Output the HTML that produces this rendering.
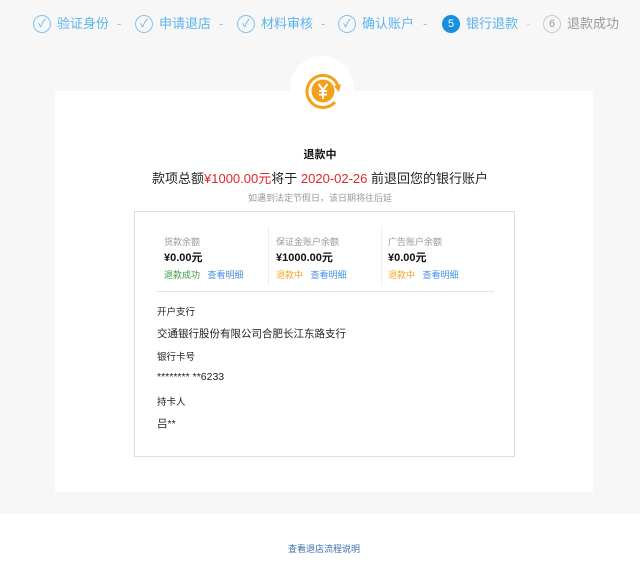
<!DOCTYPE html>
<html><head><meta charset="utf-8"><style>
*{margin:0;padding:0;box-sizing:border-box}
body{width:640px;height:569px;background:#fff;font-family:"Liberation Sans","Noto Sans CJK SC",sans-serif;position:relative;overflow:hidden}
.top{position:absolute;left:0;top:0;width:640px;height:514px;background:#f7f7f7}
.a{position:absolute;white-space:nowrap}
.c{position:absolute;width:18px;height:18px;border-radius:50%;border:1px solid #7cc6f2;top:15px;color:#5ab5ee;font-size:11px;text-align:center;line-height:16px}
.st{position:absolute;top:15px;font-size:13px;line-height:18px;color:#5ab5ee}
.d{position:absolute;top:15px;font-size:13px;line-height:18px;color:#8cc8ee}
.card{position:absolute;left:55px;top:91px;width:538px;height:401px;background:#fff}
.box{position:absolute;left:134px;top:211px;width:381px;height:246px;border:1px solid #ddd;background:#fff}
.lbl{font-size:9px;color:#999}
.amt{font-size:11px;color:#111;font-weight:bold}
.s{font-size:9px}
.t{font-size:9.5px;color:#222}
</style></head><body>
<div class="top"></div>
<div class="c" style="left:33px">✓</div><div class="st" style="left:57px">验证身份</div><div class="d" style="left:117px">-</div>
<div class="c" style="left:135px">✓</div><div class="st" style="left:159px">申请退店</div><div class="d" style="left:219px">-</div>
<div class="c" style="left:237px">✓</div><div class="st" style="left:261px">材料审核</div><div class="d" style="left:321px">-</div>
<div class="c" style="left:338px">✓</div><div class="st" style="left:362px">确认账户</div><div class="d" style="left:423px">-</div>
<div class="c" style="left:442px;background:#1a8ee0;border-color:#1a8ee0;color:#fff">5</div><div class="st" style="left:466px">银行退款</div><div class="d" style="left:526px;color:#ddd">-</div>
<div class="c" style="left:543px;border-color:#ccc;color:#999">6</div><div class="st" style="left:567px;color:#999">退款成功</div>
<div class="card"></div>
<div class="a" style="left:290px;top:56px;width:64px;height:64px;border-radius:50%;background:#fff"></div>
<svg class="a" style="left:303px;top:71px" width="42" height="40" viewBox="0 0 42 40">
<circle cx="20" cy="20" r="11.5" fill="#f5a01a"/>
<path d="M35 15 A16 16 0 1 0 32 31" fill="none" stroke="#f5a01a" stroke-width="3"/>
<path d="M31 15 L38 13 L36 21 Z" fill="#f5a01a"/>
<path d="M15.5 13 L20 19 L24.5 13 M20 19 V28 M16 20 H24 M16 23.5 H24" stroke="#fff" stroke-width="2" fill="none"/>
</svg>
<div class="a" style="left:0;width:640px;text-align:center;top:146px;font-size:11px;font-weight:bold;color:#111">退款中</div>
<div class="a" style="left:0;width:640px;text-align:center;top:168px;font-size:13px;color:#222">款项总额<span style="color:#e0262c">¥1000.00元</span>将于 <span style="color:#e0262c">2020-02-26</span> 前退回您的银行账户</div>
<div class="a" style="left:0;width:640px;text-align:center;top:191px;font-size:9px;color:#999">如遇到法定节假日，该日期将往后延</div>
<div class="box"></div>
<div class="a" style="left:268px;top:226px;width:1px;height:60px;background:#eee"></div>
<div class="a" style="left:381px;top:226px;width:1px;height:60px;background:#eee"></div>
<div class="a" style="left:156px;top:291px;width:338px;height:1px;background:#e6e6e6"></div>
<div class="a lbl" style="left:164px;top:235px">货款余额</div>
<div class="a amt" style="left:164px;top:249px">¥0.00元</div>
<div class="a s" style="left:164px;top:268px"><span style="color:#3a9a3a">退款成功</span>&nbsp;&nbsp;&nbsp;<span style="color:#4a90e2">查看明细</span></div>
<div class="a lbl" style="left:276px;top:235px">保证金账户余额</div>
<div class="a amt" style="left:276px;top:249px">¥1000.00元</div>
<div class="a s" style="left:276px;top:268px"><span style="color:#f5a623">退款中</span>&nbsp;&nbsp;&nbsp;<span style="color:#4a90e2">查看明细</span></div>
<div class="a lbl" style="left:388px;top:235px">广告账户余额</div>
<div class="a amt" style="left:388px;top:249px">¥0.00元</div>
<div class="a s" style="left:388px;top:268px"><span style="color:#f5a623">退款中</span>&nbsp;&nbsp;&nbsp;<span style="color:#4a90e2">查看明细</span></div>
<div class="a t" style="left:157px;top:304px">开户支行</div>
<div class="a t" style="left:157px;top:326px;font-size:10.5px">交通银行股份有限公司合肥长江东路支行</div>
<div class="a t" style="left:157px;top:349px">银行卡号</div>
<div class="a t" style="left:157px;top:371px;font-size:10.5px">******** **6233</div>
<div class="a t" style="left:157px;top:394px">持卡人</div>
<div class="a t" style="left:157px;top:416px;font-size:10.5px">吕**</div>
<div class="a" style="left:0;width:648px;text-align:center;top:542px;font-size:9px;color:#3a6fb0">查看退店流程说明</div>
</body></html>
